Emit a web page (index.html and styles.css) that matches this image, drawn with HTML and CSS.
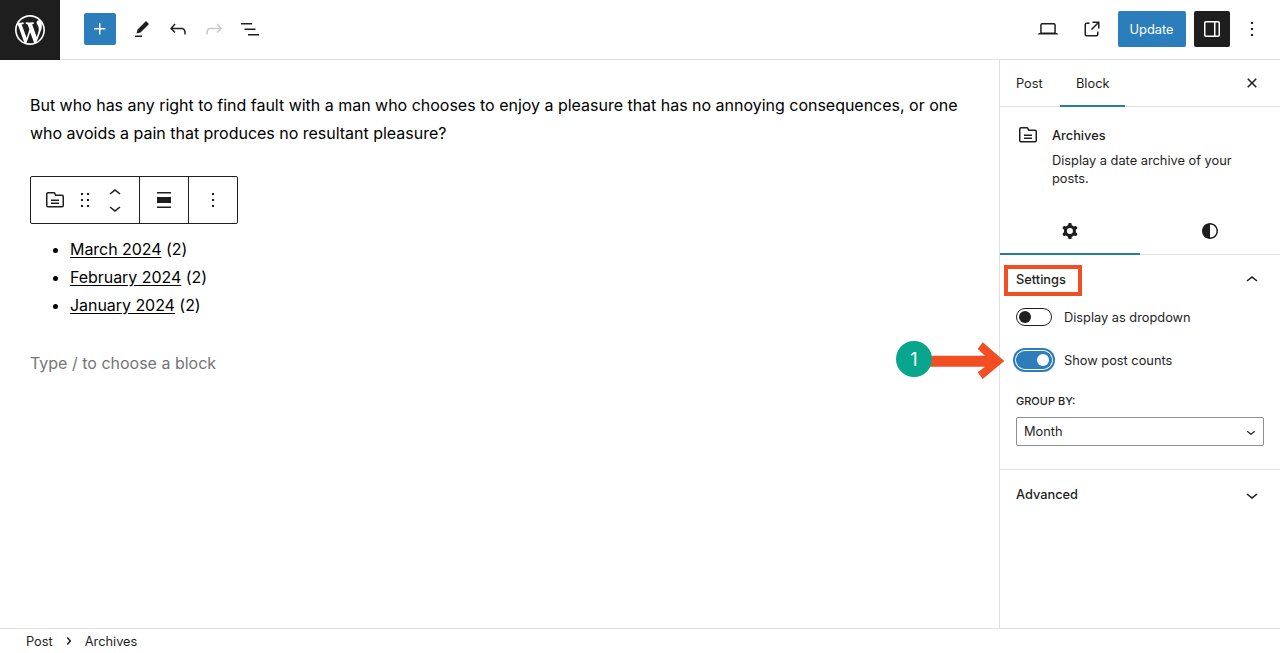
FILE: index.html
```html
<!DOCTYPE html>
<html lang="en">
<head>
<meta charset="utf-8">
<title>Edit Post</title>
<link rel="stylesheet" href="styles.css">
</head>
<body>
<div class="app">
  <header class="topbar">
    <div class="logo"><svg viewBox="0 0 20 20" width="30" height="30"><path fill="#fff" d="M20 10c0-5.51-4.49-10-10-10C4.48 0 0 4.49 0 10c0 5.52 4.48 10 10 10 5.51 0 10-4.48 10-10zM7.78 15.37L4.37 6.22c.55-.02 1.17-.08 1.17-.08.5-.06.44-1.13-.06-1.11 0 0-1.45.11-2.37.11-.18 0-.37 0-.58-.01C4.12 2.69 6.87 1.11 10 1.11c2.33 0 4.45.87 6.05 2.34-.68-.11-1.65.39-1.65 1.58 0 .74.45 1.36.9 2.1.35.61.55 1.36.55 2.46 0 1.49-1.4 5-1.4 5l-3.03-8.37c.54-.02.82-.17.82-.17.5-.05.44-1.25-.06-1.22 0 0-1.44.12-2.38.12-.87 0-2.33-.12-2.33-.12-.5-.03-.56 1.2-.06 1.22l.92.08 1.26 3.41zM17.41 10c.24-.64.74-1.87.43-4.25.7 1.29 1.05 2.71 1.05 4.25 0 3.29-1.73 6.24-4.4 7.78.97-2.59 1.94-5.2 2.92-7.78zM6.1 18.09C3.12 16.65 1.11 13.53 1.11 10c0-1.3.23-2.48.72-3.59C3.25 10.3 4.67 14.2 6.1 18.09zm4.03-6.63l2.58 6.98c-.86.29-1.76.45-2.71.45-.79 0-1.57-.11-2.29-.33.81-2.38 1.62-4.74 2.42-7.1z"/></svg></div>
    <div class="tools-left">
      <div class="add-btn"><svg viewBox="0 0 24 24" width="24" height="24"><path fill="#fff" d="M11 12.5V17.5H12.5V12.5H17.5V11H12.5V6H11V11H6V12.5H11Z"/></svg></div>
      <div class="tool first"><svg viewBox="0 0 24 24" width="24" height="24"><path d="m19 7-3-3-8.500 8.500-1 4 4-1L19 7Zm-7 11.500H5V20h7v-1.500Z"/></svg></div>
      <div class="tool"><svg viewBox="0 0 24 24" width="24" height="24"><path d="M18.300 11.700c-.6-.6-1.400-.9-2.300-.9H6.700l2.900-3.300-1.100-1-4.500 5L8.500 16l1-1-2.700-2.700H16c.5 0 .9.2 1.300.5 1 1 1 3.400 1 4.500v.3h1.500v-.2c0-1.500 0-4.300-1.500-5.700z"/></svg></div>
      <div class="tool disabled"><svg viewBox="0 0 24 24" width="24" height="24"><path d="M15.600 6.500l-1.100 1 2.900 3.300H8c-.9 0-1.700.3-2.300.9-1.400 1.500-1.400 4.200-1.400 5.600v.2h1.500v-.3c0-1.100 0-3.500 1-4.500.3-.3.7-.5 1.300-.5h9.200L14.500 15l1.100 1.100 4.600-4.600-4.600-5z"/></svg></div>
      <div class="tool"><svg viewBox="0 0 24 24" width="24" height="24"><path d="M3 6h11v1.500H3V6Zm3.500 5.500h11V13h-11v-1.500ZM21 17H10v1.500h11V17Z"/></svg></div>
    </div>
    <div class="tools-right">
      <div class="tool"><svg viewBox="0 0 24 24" width="24" height="24"><path d="M20.500 16h-.7V8c0-1.100-.9-2-2-2H6.200c-1.100 0-2 .9-2 2v8h-.7c-.8 0-1.500.7-1.500 1.500h20c0-.8-.7-1.500-1.500-1.500zM5.700 8c0-.3.2-.5.5-.5h11.600c.3 0 .5.2.5.5v7.600H5.700V8z"/></svg></div>
      <div class="tool external"><svg viewBox="0 0 24 24" width="24" height="24"><path d="M19.500 4.500h-7V6h4.440l-5.970 5.970 1.060 1.060L18 7.060v4.440h1.500v-7Zm-13 1a2 2 0 0 0-2 2v10a2 2 0 0 0 2 2h10a2 2 0 0 0 2-2v-3H17v3a.5.5 0 0 1-.5.5h-10a.5.5 0 0 1-.5-.5v-10a.5.5 0 0 1 .5-.5h3V5.500h-3Z"/></svg></div>
      <div class="update-btn">Update</div>
      <div class="drawer-btn"><svg viewBox="0 0 24 24" width="24" height="24"><path fill="#fff" fill-rule="evenodd" d="M18 4H6c-1.100 0-2 .9-2 2v12c0 1.100.9 2 2 2h12c1.100 0 2-.9 2-2V6c0-1.100-.9-2-2-2zm-4 14.500H6c-.3 0-.5-.2-.5-.5V6c0-.3.2-.5.5-.5h8v13zm4.500-.5c0 .3-.2.5-.5.5h-2.500v-13H18c.3 0 .5.2.5.5v12z"/></svg></div>
      <div class="tool more"><svg viewBox="0 0 24 24" width="24" height="24"><path d="M13 19h-2v-2h2v2zm0-6h-2v-2h2v2zm0-6h-2V5h2v2z"/></svg></div>
    </div>
  </header>

  <div class="workspace">
    <main class="editor">
      <p class="para">But who has any right to find fault with a man who chooses to enjoy a pleasure that has no annoying consequences, or one who avoids a pain that produces no resultant pleasure?</p>
      <div class="block-toolbar">
        <div class="bt-group bt-main">
          <svg viewBox="0 0 24 24" width="24" height="24"><path fill-rule="evenodd" d="M11.934 7.406a1 1 0 0 0 .914.594H19a.5.5 0 0 1 .5.5v9a.5.5 0 0 1-.5.5H5a.5.5 0 0 1-.5-.5V6a.5.5 0 0 1 .5-.5h5.764a.5.5 0 0 1 .447.276l.723 1.630Zm1.064-1.216a.5.5 0 0 0 .462.31H19a2 2 0 0 1 2 2v9a2 2 0 0 1-2 2H5a2 2 0 0 1-2-2V6a2 2 0 0 1 2-2h5.764a2 2 0 0 1 1.789 1.106l.445 1.084ZM8 13V11.500h8V13H8Zm0 3v-1.500h8V16H8Z"/></svg>
          <svg class="drag" viewBox="0 0 24 24" width="24" height="24"><path d="M8 7h2V5H8v2zm0 6h2v-2H8v2zm0 6h2v-2H8v2zm6-14v2h2V5h-2zm0 8h2v-2h-2v2zm0 6h2v-2h-2v2z"/></svg>
          <div class="movers">
            <svg viewBox="0 0 24 24" width="24" height="24"><path d="M6.500 12.400L12 8l5.500 4.400-.9 1.200L12 10l-4.500 3.600-1-1.200z"/></svg>
            <svg viewBox="0 0 24 24" width="24" height="24"><path d="M17.500 11.600L12 16l-5.500-4.400.9-1.200L12 14l4.500-3.600 1 1.200z"/></svg>
          </div>
        </div>
        <div class="bt-group bt-align"><svg viewBox="0 0 24 24" width="24" height="24"><path d="M19 5.500H5V4h14v1.500ZM19 20H5v-1.500h14V20ZM5 9h14v6H5V9Z"/></svg></div>
        <div class="bt-group bt-more"><svg viewBox="0 0 24 24" width="24" height="24"><path d="M13 19h-2v-2h2v2zm0-6h-2v-2h2v2zm0-6h-2V5h2v2z"/></svg></div>
      </div>
      <ul class="archives">
        <li><a href="#">March 2024</a> (2)</li>
        <li><a href="#">February 2024</a> (2)</li>
        <li><a href="#">January 2024</a> (2)</li>
      </ul>
      <p class="placeholder">Type / to choose a block</p>
    </main>

    <aside class="sidebar">
      <div class="side-tabs">
        <div class="side-tab">Post</div>
        <div class="side-tab active">Block</div>
        <div class="side-close"><svg viewBox="0 0 24 24" width="24" height="24"><path d="M12 13.060l3.712 3.713 1.061-1.060L13.061 12l3.712-3.712-1.060-1.060L12 10.938 8.288 7.227l-1.061 1.060L10.939 12l-3.712 3.712 1.060 1.061L12 13.061z"/></svg></div>
      </div>
      <div class="block-card">
        <svg viewBox="0 0 24 24" width="24" height="24"><path fill-rule="evenodd" d="M11.934 7.406a1 1 0 0 0 .914.594H19a.5.5 0 0 1 .5.5v9a.5.5 0 0 1-.5.5H5a.5.5 0 0 1-.5-.5V6a.5.5 0 0 1 .5-.5h5.764a.5.5 0 0 1 .447.276l.723 1.630Zm1.064-1.216a.5.5 0 0 0 .462.31H19a2 2 0 0 1 2 2v9a2 2 0 0 1-2 2H5a2 2 0 0 1-2-2V6a2 2 0 0 1 2-2h5.764a2 2 0 0 1 1.789 1.106l.445 1.084ZM8 13V11.500h8V13H8Zm0 3v-1.500h8V16H8Z"/></svg>
        <div class="card-text">
          <div class="card-title">Archives</div>
          <div class="card-desc">Display a date archive of your posts.</div>
        </div>
      </div>
      <div class="style-tabs">
        <div class="style-tab active"><svg viewBox="0 0 24 24" width="24" height="24"><path fill-rule="evenodd" d="M10.289 4.836A1 1 0 0 1 11.275 4h1.306a1 1 0 0 1 .987.836l.244 1.466c.787.26 1.503.679 2.108 1.218l1.393-.522a1 1 0 0 1 1.216.437l.653 1.130a1 1 0 0 1-.23 1.273l-1.148.944a6.025 6.025 0 0 1 0 2.435l1.149.946a1 1 0 0 1 .23 1.272l-.653 1.130a1 1 0 0 1-1.216.437l-1.394-.522c-.605.54-1.320.958-2.108 1.218l-.244 1.466a1 1 0 0 1-.987.836h-1.306a1 1 0 0 1-.986-.836l-.244-1.466a5.995 5.995 0 0 1-2.108-1.218l-1.394.522a1 1 0 0 1-1.217-.436l-.653-1.131a1 1 0 0 1 .23-1.272l1.149-.946a6.026 6.026 0 0 1 0-2.435l-1.148-.944a1 1 0 0 1-.23-1.272l.653-1.131a1 1 0 0 1 1.217-.437l1.393.522a5.994 5.994 0 0 1 2.108-1.218l.244-1.466ZM14.929 12a3 3 0 1 1-6 0 3 3 0 0 1 6 0Z"/></svg></div>
        <div class="style-tab"><svg viewBox="0 0 24 24" width="24" height="24"><path d="M12 4c-4.400 0-8 3.600-8 8s3.600 8 8 8 8-3.600 8-8-3.600-8-8-8zm0 14.500V5.500c3.600 0 6.500 2.900 6.500 6.500s-2.900 6.500-6.500 6.500z"/></svg></div>
      </div>
      <section class="panel settings">
        <div class="panel-head">
          <span>Settings</span>
          <svg viewBox="0 0 24 24" width="24" height="24"><path d="M6.500 12.400L12 8l5.500 4.400-.9 1.200L12 10l-4.500 3.600-1-1.200z"/></svg>
        </div>
        <div class="toggle-row">
          <span class="toggle"><span class="knob"></span></span>
          <span>Display as dropdown</span>
        </div>
        <div class="toggle-row on">
          <span class="toggle"><span class="knob"></span></span>
          <span>Show post counts</span>
        </div>
        <div class="field-label">GROUP BY:</div>
        <div class="select">
          <span>Month</span>
          <svg viewBox="0 0 24 24" width="18" height="18"><path d="M17.500 11.600L12 16l-5.500-4.400.9-1.200L12 14l4.500-3.600 1 1.200z"/></svg>
        </div>
      </section>
      <section class="panel advanced">
        <div class="panel-head">
          <span>Advanced</span>
          <svg viewBox="0 0 24 24" width="24" height="24"><path d="M17.500 11.600L12 16l-5.500-4.400.9-1.200L12 14l4.500-3.600 1 1.200z"/></svg>
        </div>
      </section>
    </aside>
  </div>

  <footer class="crumbs">
    <span>Post</span>
    <svg viewBox="0 0 24 24" width="24" height="24"><path d="M10.862 8.040L14.280 12.028L10.862 16.016L9.723 15.040L12.304 12.028L9.723 9.016L10.862 8.040Z"/></svg>
    <span>Archives</span>
  </footer>

  <div class="note-box"></div>
  <svg class="note-arrow" viewBox="0 0 76 40" width="76" height="40"><path fill="#f24e23" d="M0 13.700H55L47.700 7 52.700.3 74.300 19 52.700 37 47.700 30.300 55 24.700H0Z"/></svg>
  <div class="note-badge">1</div>
</div>
</body>
</html>
```
FILE: styles.css
```css
* { box-sizing: border-box; }
html, body { margin: 0; height: 100%; }
body { font-family: Inter, "Liberation Sans", sans-serif; color: #1e1e1e; background: #fff; overflow: hidden; }
svg { display: block; fill: #1e1e1e; flex: none; }
.app { position: relative; width: 1280px; height: 653px; display: flex; flex-direction: column; }

.topbar { height: 60px; flex: none; display: flex; align-items: center; border-bottom: 1px solid #e0e0e0; }
.logo { width: 60px; height: 60px; background: #1e1e1e; display: flex; align-items: center; justify-content: center; margin-bottom: -1px; }
.tools-left { display: flex; align-items: center; margin-left: 24px; margin-bottom: 1px; }
.add-btn { width: 32px; height: 32px; background: #2c7dbb; border-radius: 2px; display: flex; align-items: center; justify-content: center; }
.tool { width: 36px; height: 36px; display: flex; align-items: center; justify-content: center; }
.tool.first { margin-left: 8px; }
.tool.disabled svg { fill: #c9c9c9; }
.tools-right { display: flex; align-items: center; margin-left: auto; padding-right: 10px; margin-bottom: 1px; }
.external { margin-left: 8px; }
.update-btn { width: 68px; height: 36px; margin-left: 8px; padding-right: 1px; background: #2c7dbb; color: #fff; border-radius: 2px; font-size: 12.8px; display: flex; align-items: center; justify-content: center; }
.drawer-btn { width: 36px; height: 36px; margin-left: 8px; background: #1e1e1e; border-radius: 2px; display: flex; align-items: center; justify-content: center; }
.more { margin-left: 4px; }

.workspace { flex: 1; display: flex; min-height: 0; }
.editor { flex: 1; padding: 31px 30px 0; min-width: 0; color: #000; }
.para { margin: 0; font-size: 16px; line-height: 28px; letter-spacing: -0.016px; }
.block-toolbar { display: flex; width: 208px; height: 48px; margin-top: 29px; border: 1px solid #1e1e1e; border-radius: 2px; }
.bt-group { display: flex; align-items: center; justify-content: center; border-right: 1px solid #1e1e1e; height: 100%; }
.bt-main { width: 109px; padding-right: 1px; }
.bt-main .drag { margin-left: 6px; }
.movers { display: flex; flex-direction: column; margin-left: 6px; }
.movers svg { margin: -4.500px 0; }
.bt-align { width: 49px; }
.bt-more { flex: 1; border-right: 0; }
.archives { margin: 11px 0 0; padding: 0 0 0 40px; font-size: 16px; line-height: 28px; letter-spacing: -0.05px; }
.archives a { color: #000; text-decoration: underline; text-underline-offset: 2px; }
.placeholder { margin: 30px 0 0; font-size: 16px; line-height: 28px; color: #757575; }

.sidebar { width: 281px; flex: none; border-left: 1px solid #e0e0e0; font-size: 12.8px; }
.side-tabs { height: 47px; display: flex; align-items: center; border-bottom: 1px solid #e0e0e0; }
.side-tab { height: 46px; padding: 0 16px; display: flex; align-items: center; }
.side-tab.active { box-shadow: 0 1px 0 #2a7aa8, inset 0 -1px 0 #2a7aa8; }
.side-tab:first-child { width: 60px; }
.side-close { margin-left: auto; margin-right: 16px; }
.block-card { display: flex; gap: 12px; padding: 16px 16px 0 16px; height: 100px; }
.card-text { margin-top: 1px; }
.card-title { font-weight: 500; line-height: 24px; }
.card-desc { margin-top: 4px; line-height: 18px; width: 200px; }
.style-tabs { display: flex; height: 48px; border-bottom: 1px solid #e0e0e0; }
.style-tab { flex: 1; display: flex; align-items: center; justify-content: center; }
.style-tab.active { box-shadow: 0 1px 0 #2a7aa8, inset 0 -1px 0 #2a7aa8; }
.panel { padding: 0 16px; }
.settings { height: 215px; border-bottom: 1px solid #e0e0e0; }
.panel-head { height: 49px; display: flex; align-items: center; justify-content: space-between; font-weight: 500; }
.toggle-row { display: flex; align-items: center; gap: 12px; height: 18px; margin-top: 4px; }
.toggle-row.on { margin-top: 25px; }
.toggle { width: 36px; height: 18px; border: 1px solid #1e1e1e; border-radius: 9px; position: relative; display: block; }
.knob { position: absolute; left: 2px; top: 2px; width: 12px; height: 12px; border-radius: 50%; background: #1e1e1e; }
.on .toggle { background: #2c7dbb; border-color: #2c7dbb; box-shadow: 0 0 0 1px #fff, 0 0 0 3px #2c7dbb; }
.on .knob { left: 20px; background: #fff; }
.field-label { font-size: 11px; font-weight: 500; line-height: 14px; margin-top: 25px; }
.select { height: 29px; margin-top: 9px; border: 1px solid #8c8f94; border-radius: 2px; display: flex; align-items: center; justify-content: space-between; padding: 0 3px 0 7px; }

.crumbs { height: 25px; flex: none; border-top: 1px solid #e0e0e0; display: flex; align-items: center; font-size: 12.8px; padding-left: 26px; }
.crumbs svg { margin: 0 4px; }

.note-box { position: absolute; left: 1004px; top: 265px; width: 78px; height: 31px; border: 4px solid #f24e23; }
.note-badge { position: absolute; left: 896px; top: 341px; width: 36px; height: 36px; border-radius: 50%; background: #07a68c; color: #fff; font-size: 18px; display: flex; align-items: center; justify-content: center; }
.note-arrow { position: absolute; left: 930px; top: 342px; }
```
